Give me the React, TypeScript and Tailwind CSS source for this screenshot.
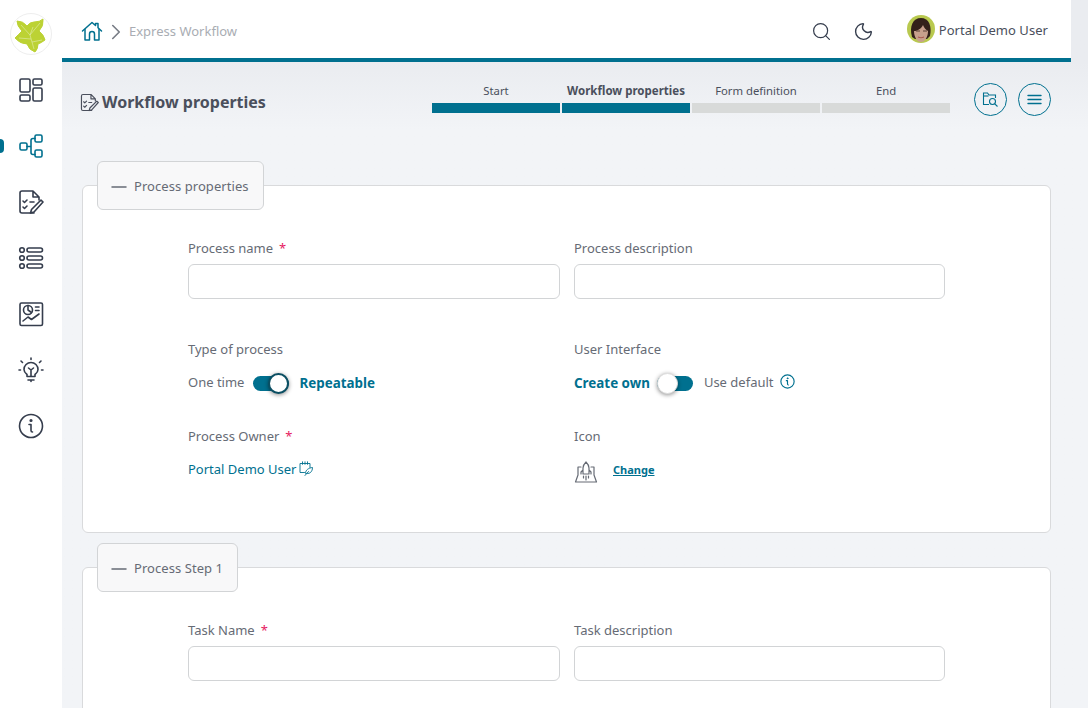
import { ChevronRight, Moon, Search, Minus } from 'lucide-react';
import type { ReactNode } from 'react';

const font = { fontFamily: '"Noto Sans", sans-serif' };

const IconBase = ({ size = 26, className = '', vb = 26, children }: { size?: number; className?: string; vb?: number; children: ReactNode }) => (
  <svg width={size} height={size} viewBox={`0 0 ${vb} ${vb}`} fill="none" stroke="currentColor" strokeWidth={1.6} strokeLinecap="round" strokeLinejoin="round" className={className}>
    {children}
  </svg>
);

const Ivy = () => (
  <svg width={36} height={36} viewBox="0 0 36 36" className="ml-[2px] mt-[1px]">
    <path
      d="M3 4Q9 4 13 9 16 5 20 5 26 5 29 2 30 9 25 14 30 18 31 23 27 26 24 27 24 32 21 35 15 33 13 27 6 27 1 21 5 17 8 14 3 9 3 4Z"
      fill="#bcd234"
      stroke="#bcd234"
      strokeWidth="1"
      strokeLinejoin="round"
    />
    <path d="M20 32 16 18 7 8M16 18l10-12M17 22 5 21M18 25l10-2M16 18l3-8" stroke="#e3ecb0" strokeWidth="0.6" fill="none" />
  </svg>
);

const DashIcon = () => (
  <IconBase>
    <rect x="2" y="2" width="10" height="13" rx="1.5" />
    <rect x="15" y="2" width="9" height="6" rx="1.5" />
    <rect x="15" y="11" width="9" height="13" rx="1.5" />
    <rect x="2" y="18" width="10" height="6" rx="1.5" />
  </IconBase>
);

const FlowIcon = () => (
  <IconBase>
    <rect x="2" y="10" width="7" height="7" rx="1.5" />
    <rect x="17" y="2" width="7" height="7" rx="1.5" />
    <rect x="17" y="17" width="7" height="7" rx="1.5" />
    <path d="M9 13.5h4M17 5.5h-2a2 2 0 0 0-2 2v12a2 2 0 0 0 2 2h2" />
  </IconBase>
);

const TaskIcon = ({ size = 26 }: { size?: number }) => (
  <IconBase size={size}>
    <path d="M16 24H4a2 2 0 0 1-2-2V4a2 2 0 0 1 2-2h11l6 6v3M15 2v6h6" />
    <path d="m5 12 1.5 1.5L9 11M5 18l1.5 1.5L9 17M12 13h4" />
    <path d="m23 11 2 2-9 10-3.5 1 1-3.5z" />
  </IconBase>
);

const ListIcon = () => (
  <IconBase>
    <circle cx="4" cy="5" r="2.3" />
    <circle cx="4" cy="13" r="2.3" />
    <circle cx="4" cy="21" r="2.3" />
    <rect x="9" y="3" width="15.5" height="4" rx="2" />
    <rect x="9" y="11" width="15.5" height="4" rx="2" />
    <rect x="9" y="19" width="15.5" height="4" rx="2" />
  </IconBase>
);

const ReportIcon = () => (
  <IconBase>
    <rect x="2" y="2" width="22.5" height="22.5" rx="1.5" />
    <circle cx="10" cy="9" r="4.5" />
    <path d="M10 4.5V9l3.5 2.5M17.5 6H21M17.5 9.500H21M5 20l5-4 3.5 2.5L21 13" />
  </IconBase>
);

const BulbIcon = () => (
  <IconBase>
    <path d="M9 17.5c-2-1.500-3-3-3-5a7 7 0 0 1 14 0c0 2-1 3.500-3 5v2H9z" />
    <path d="M10 23h6M13 24.500v-1M13 19v-6l-2.500-2M13 13l2.500-2M13 1v1.500M3 4l1.500 1.500M23 4l-1.500 1.500M1 13h1.500M25 13h-1.500" />
  </IconBase>
);

const InfoCircle = ({ size = 26, thin = false }: { size?: number; thin?: boolean }) => (
  <IconBase size={size}>
    <circle cx="13" cy="13" r="11.5" strokeWidth={thin ? 2 : 1.6} />
    <path d="M11 11.500h2v6a1.500 1.500 0 0 0 1.500 1.500" strokeWidth={thin ? 2 : 1.6} />
    <circle cx="13" cy="7.500" r="0.800" fill="currentColor" />
  </IconBase>
);

const HomeIcon = () => (
  <svg width={22} height={22} viewBox="0 0 22 22" fill="none" stroke="#00708f" strokeWidth={1.5} strokeLinejoin="round" strokeLinecap="round" className="-mt-[1px]">
    <path d="M1.500 11 11 2.500l3.500 3V3.500H17v4.200l3.500 3.300" />
    <path d="M4 9.500V20h4.500v-6a2.500 2.500 0 0 1 5 0v6H18V9.500" />
  </svg>
);

const Avatar = () => (
  <svg width={28} height={28} viewBox="0 0 28 28" className="-mt-[5px]">
    <circle cx="14" cy="14" r="14" fill="#b9c94f" />
    <path d="M5 22C2 11 6 3 14 3c8 0 11 8 9 18l-3 3H8z" fill="#33211a" />
    <path d="M7 16c3 0 7-2 9-6 1 3 3 5 5 6 0 6-3 11-7 11s-7-5-7-11z" fill="#c7a08c" />
    <path d="M9 16h4M16 16h4" stroke="#5a4036" strokeWidth="1.100" />
    <path d="M11 22c2 1 4 1 6 0" stroke="#a8594f" strokeWidth="1.100" fill="none" />
  </svg>
);

const sideItems = [
  { icon: <DashIcon />, active: false },
  { icon: <FlowIcon />, active: true },
  { icon: <TaskIcon />, active: false },
  { icon: <ListIcon />, active: false },
  { icon: <ReportIcon />, active: false },
  { icon: <BulbIcon />, active: false },
  { icon: <InfoCircle />, active: false },
];

const steps = [
  { label: 'Start', done: true, current: false },
  { label: 'Workflow properties', done: true, current: true },
  { label: 'Form definition', done: false, current: false },
  { label: 'End', done: false, current: false },
];

const Sidebar = () => (
  <aside className="w-[62px] shrink-0 bg-white flex flex-col items-center">
    <div className="mt-[13px] w-[42px] h-[42px] rounded-full border border-[#eeeeee] flex items-center justify-center">
      <Ivy />
    </div>
    <div className="mt-[7px] flex flex-col w-full">
      {sideItems.map((item, i) => (
        <div key={i} className={`relative h-[56px] flex items-center justify-center ${item.active ? 'text-[#00708f]' : 'text-[#353d4d]'}`}>
          {item.active && <span className="absolute left-0 top-[21px] w-[4px] h-[14px] bg-[#00708f] rounded-r-full" />}
          {item.icon}
        </div>
      ))}
    </div>
  </aside>
);

const Header = () => (
  <header className="h-[62px] mr-[17px] bg-white border-b-[4px] border-[#00708f] flex items-center pl-[19px] pr-[23px] pt-[5px]">
    <HomeIcon />
    <ChevronRight className="w-[26px] h-[26px] text-[#777c85]" strokeWidth={1.5} />
    <span className="mt-[1px] text-[13px] text-[#a9adb3]">Express Workflow</span>
    <Search className="ml-auto w-[21px] h-[21px] text-[#353d4d]" strokeWidth={1.4} />
    <Moon className="ml-[21px] w-[21px] h-[21px] text-[#353d4d]" strokeWidth={1.6} />
    <div className="ml-[33px] flex items-center gap-[4px]">
      <Avatar />
      <span className="-mt-[1px] text-[13px] tracking-[0.05px] text-[#4a4f5c]">Portal Demo User</span>
    </div>
  </header>
);

const Steps = () => (
  <div className="flex gap-[2px] w-[518px]">
    {steps.map((s) => (
      <div key={s.label} className="w-[128px] pt-[1px] flex flex-col items-center">
        <span className={`leading-[16px] whitespace-nowrap text-[#4a4f5c] ${s.current ? 'text-[11.5px] font-bold' : 'text-[11.3px]'}`}>{s.label}</span>
        <span className={`mt-[4px] w-full h-[10px] ${s.done ? 'bg-[#00708f]' : 'bg-[#d8dad9]'}`} />
      </div>
    ))}
  </div>
);

const RoundBtn = ({ children }: { children: ReactNode }) => (
  <button className="w-[33px] h-[33px] rounded-full border border-[#00708f] flex items-center justify-center text-[#00708f]">{children}</button>
);

const FolderSearch = () => (
  <svg width={17} height={17} viewBox="0 0 17 17" fill="none" stroke="#00708f" strokeWidth={1.1}>
    <path d="M7 13.500H1.500V2h4l1.500 2h6.500v3" />
    <path d="M1.500 5h5" />
    <circle cx="10.500" cy="10.500" r="3" />
    <path d="m12.800 12.800 2.700 2.700" />
  </svg>
);

const MenuLines = () => (
  <svg width={15} height={11} viewBox="0 0 15 11" fill="none" stroke="#00708f" strokeWidth={1.4} strokeLinecap="round">
    <path d="M1 1.500h13M1 5.500h13M1 9.500h13" />
  </svg>
);

const Field = ({ label, required, width }: { label: string; required?: boolean; width: string }) => (
  <div className={width}>
    <div className="h-[18px] flex items-center text-[13px] text-[#666b75]">
      {label}
      {required && <span className="ml-[6px] text-[#e6195f]">*</span>}
    </div>
    <input className="mt-[6px] block w-full h-[35px] rounded-[6px] border border-[#d2d4d6] bg-white" />
  </div>
);

const Section = ({ title, className, children }: { title: string; className: string; children: ReactNode }) => (
  <section className={`ml-[20px] mr-[37px] border border-[#d9dadc] rounded-[6px] bg-white ${className}`}>
    <div className="-mt-[25px] ml-[14px] w-fit h-[49px] pl-[9px] pr-[14px] pt-[2px] flex items-center gap-[3px] bg-[#f8f8f9] border border-[#d2d4d6] rounded-[6px] text-[13px] tracking-[0.06px] text-[#666b75]">
      <Minus className="w-[24px] h-[24px] text-[#666b75]" strokeWidth={1.5} />
      {title}
    </div>
    {children}
  </section>
);

const Toggle = ({ on }: { on: boolean }) => (
  <span className="relative block w-[36px] h-[15px] rounded-full bg-[#00708f]">
    <span className={`absolute -top-[3px] w-[21px] h-[21px] rounded-full bg-white shadow-[0_1px_4px_rgba(0,0,0,0.45)] ${on ? 'right-0 border-2 border-[#0b4f63]' : 'left-0 border border-[#dddddd]'}`} />
  </span>
);

const RocketIcon = () => (
  <svg width={24} height={24} viewBox="0 0 24 24" fill="none" stroke="#666b75" strokeWidth={1.2} strokeLinejoin="round" strokeLinecap="round">
    <path d="M9 14V8c0-3 2-5 3-6 1 1 3 3 3 6v6zM9 10l-2 2v2M15 10l2 2v2M12 16v4M9.500 16v2M14.500 16v2" />
    <path d="M7 7H4v8M17 7h3v8M4 15l-2.500 7h21L20 15" />
  </svg>
);

const OwnerEditIcon = () => (
  <svg width={15} height={15} viewBox="0 0 15 15" fill="none" stroke="#00708f" strokeWidth={0.9} strokeLinecap="round" strokeLinejoin="round" className="-mt-[4px]">
    <path d="M5.500 11.500H1v-9h10v4M3.500.800v2.500M6 .800v2.500M8.500.800v2.500" />
    <path d="M6.500 12c0-3 3-5 7-5.500 0 4-2.500 6.500-5.500 6zM6 14.500l3.500-4" />
  </svg>
);

const App = () => (
  <div className="w-[1088px] h-[708px] overflow-hidden flex bg-[#f2f4f7]" style={font}>
    <Sidebar />
    <main className="flex-1 min-w-0 bg-gradient-to-b from-[#eaecf0] from-[62px] to-[#f2f4f7] to-[130px]">
      <Header />
      <div className="h-[99px] flex items-start pl-[18px] pr-[37px]">
        <div className="mt-[29px] flex items-center gap-[3px] text-[#4a4f5c]">
          <TaskIcon size={19} />
          <h1 className="text-[16px] leading-[22px] font-bold">Workflow properties</h1>
        </div>
        <div className="ml-auto mt-[20px] mr-[24px]">
          <Steps />
        </div>
        <div className="mt-[21px] flex gap-[11px]">
          <RoundBtn>
            <FolderSearch />
          </RoundBtn>
          <RoundBtn>
            <MenuLines />
          </RoundBtn>
        </div>
      </div>

      <div className="h-[24px]" />

      <Section title="Process properties" className="h-[348px]">
        <div className="mt-[30px] ml-[105px] flex gap-[14px]">
          <Field label="Process name" required width="w-[372px]" />
          <Field label="Process description" width="w-[371px]" />
        </div>
        <div className="mt-[42px] ml-[105px] flex gap-[14px]">
          <div className="w-[372px]">
            <div className="h-[18px] flex items-center text-[13px] text-[#666b75]">Type of process</div>
            <div className="mt-[14px] h-[20px] flex items-center text-[13px]">
              <span className="text-[#666b75]">One time</span>
              <span className="ml-[9px]">
                <Toggle on />
              </span>
              <span className="ml-[10px] text-[13.4px] font-bold text-[#00708f]">Repeatable</span>
            </div>
            <div className="mt-[35px] h-[18px] flex items-center text-[13px] text-[#666b75]">
              Process Owner<span className="ml-[6px] text-[#e6195f]">*</span>
            </div>
            <div className="mt-[14px] h-[20px] flex items-center gap-[3px] text-[13px] text-[#00708f]">
              Portal Demo User
              <OwnerEditIcon />
            </div>
          </div>
          <div className="w-[371px]">
            <div className="h-[18px] flex items-center text-[13px] text-[#666b75]">User Interface</div>
            <div className="mt-[14px] h-[20px] flex items-center text-[13px]">
              <span className="text-[13.4px] font-bold text-[#00708f]">Create own</span>
              <span className="ml-[7px]">
                <Toggle on={false} />
              </span>
              <span className="ml-[11px] text-[#666b75]">Use default</span>
              <span className="ml-[6px] -mt-[3px] text-[#00708f]">
                <InfoCircle size={15} thin />
              </span>
            </div>
            <div className="mt-[35px] h-[18px] flex items-center text-[13px] text-[#666b75]">Icon</div>
            <div className="mt-[13px] h-[26px] flex items-center">
              <RocketIcon />
              <a className="ml-[15px] -mt-[4px] text-[11px] font-bold underline text-[#00708f]">Change</a>
            </div>
          </div>
        </div>
      </Section>

      <div className="h-[34px]" />

      <Section title="Process Step 1" className="h-[200px]">
        <div className="mt-[30px] ml-[105px] flex gap-[14px]">
          <Field label="Task Name" required width="w-[372px]" />
          <Field label="Task description" width="w-[371px]" />
        </div>
      </Section>
    </main>
  </div>
);

export default App;
